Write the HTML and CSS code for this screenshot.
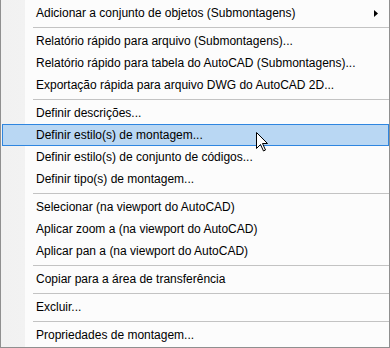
FILE: index.html
```html
<!DOCTYPE html>
<html lang="pt">
<head>
<meta charset="utf-8">
<link rel="stylesheet" href="styles.css">
</head>
<body>
<div class="menu">
  <div class="item has-sub"><span>Adicionar a conjunto de objetos (Submontagens)</span><svg class="sub" width="4" height="7" viewBox="0 0 4 7"><polygon points="0,0 4,3.5 0,7" fill="#000"/></svg></div>
  <div class="sep"></div>
  <div class="item">Relatório rápido para arquivo (Submontagens)...</div>
  <div class="item">Relatório rápido para tabela do AutoCAD (Submontagens)...</div>
  <div class="item">Exportação rápida para arquivo DWG do AutoCAD 2D...</div>
  <div class="sep"></div>
  <div class="item">Definir descrições...</div>
  <div class="item active">Definir estilo(s) de montagem...</div>
  <div class="item">Definir estilo(s) de conjunto de códigos...</div>
  <div class="item">Definir tipo(s) de montagem...</div>
  <div class="sep"></div>
  <div class="item">Selecionar (na viewport do AutoCAD)</div>
  <div class="item">Aplicar zoom a (na viewport do AutoCAD)</div>
  <div class="item">Aplicar pan a (na viewport do AutoCAD)</div>
  <div class="sep"></div>
  <div class="item">Copiar para a área de transferência</div>
  <div class="sep"></div>
  <div class="item">Excluir...</div>
  <div class="sep"></div>
  <div class="item">Propriedades de montagem...</div>
</div>
<svg class="cursor" width="13" height="20" viewBox="0 0 13 20"><path d="M0.5 0.5 L0.5 16.5 L4.5 12.5 L7.5 19 L9.5 18 L6.5 11.5 L11.5 11.5 Z" fill="#fff" stroke="#000" stroke-width="1" stroke-linejoin="miter"/></svg>
</body>
</html>
```

FILE: styles.css
```css
html, body {
  margin: 0;
  padding: 0;
  background: #ffffff;
}
.menu {
  box-sizing: border-box;
  width: 390px;
  height: 348px;
  border: 1px solid #8f8f8f;
  border-top: 0;
  padding: 2px 0 1px 1px;
  background: linear-gradient(to right, #f1f1f1 0, #f2f2f2 24px, #fcfcfc 24px) ;
  font-family: "Liberation Sans", Arial, sans-serif;
  font-size: 12px;
  color: #000;
}
.item {
  box-sizing: border-box;
  height: 22px;
  line-height: 20px;
  border: 1px solid transparent;
  padding-left: 33px;
  display: flex;
  align-items: center;
  white-space: nowrap;
}
.item.has-sub {
  justify-content: space-between;
}
.sub {
  margin-right: 10px;
  display: block;
}
.item.active {
  background: #b9d7f3;
  border-color: #2f86e0;
}
.sep {
  box-sizing: border-box;
  height: 6px;
  padding-top: 3px;
  margin-left: 31px;
}
.sep::before {
  content: "";
  display: block;
  height: 1px;
  background: #c3c3c3;
}
.cursor {
  position: absolute;
  left: 256px;
  top: 132px;
}
```
